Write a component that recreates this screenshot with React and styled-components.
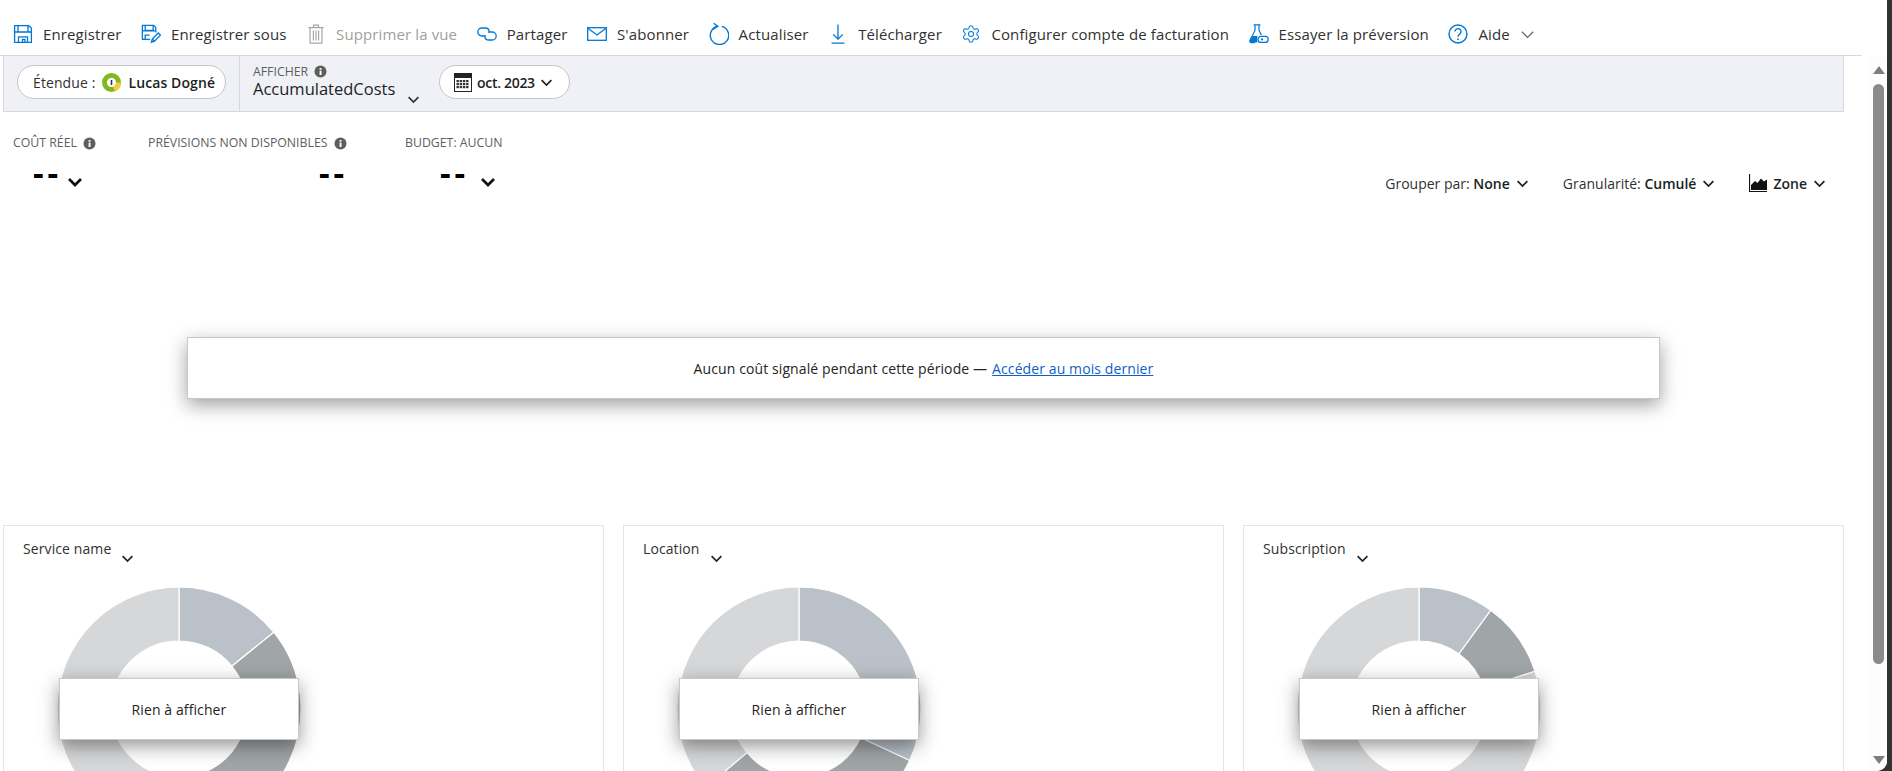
import styled, { createGlobalStyle } from 'styled-components';
import { Settings } from 'lucide-react';

const blue = '#0078d4';

const GlobalStyle = createGlobalStyle`
  html, body {
    margin: 0;
    padding: 0;
    height: 100%;
    overflow: hidden;
    background: #333;
  }
  body {
    font-family: "Open Sans", "Noto Sans", sans-serif;
    font-size: 14px;
    color: #323130;
  }
`;

const Page = styled.div`
  display: flex;
  height: 771px;
  overflow: hidden;
  background: #333;
`;

const Frame = styled.div`
  width: 1887px;
  display: flex;
  background: #fff;
  border-bottom-right-radius: 10px;
  overflow: hidden;
`;

const Main = styled.main`
  width: 1869px;
  flex: none;
`;

const Toolbar = styled.div`
  height: 56px;
  box-sizing: border-box;
  margin-right: 7px;
  padding: 13px 0 0 13px;
  display: flex;
  align-items: center;
  gap: 19.5px;
  border-bottom: 1px solid #d9d9d9;
`;

const ToolButton = styled.div`
  display: flex;
  align-items: center;
  gap: 10px;
  font-size: 15px;
  letter-spacing: 0.12px;
  white-space: nowrap;
  color: ${(p) => (p.$disabled ? '#a19f9d' : '#323130')};
  svg {
    flex: none;
  }
`;

const FilterBar = styled.div`
  height: 56px;
  box-sizing: border-box;
  margin: 0 25px 0 3px;
  display: flex;
  align-items: stretch;
  background: #eff1f6;
  border: 1px solid #d6d8dc;
  border-top: none;
`;

const ScopeSection = styled.div`
  display: flex;
  align-items: center;
  padding: 0 13px 3px;
  border-right: 1px solid #d6d8dc;
`;

const Pill = styled.div`
  height: 34px;
  box-sizing: border-box;
  display: flex;
  align-items: center;
  padding: ${(p) => p.$padding};
  width: ${(p) => p.$width};
  gap: ${(p) => p.$gap};
  background: #fff;
  border: 1px solid #c4c6c9;
  border-radius: 17px;
  white-space: nowrap;
  font-size: 14px;
  letter-spacing: 0.1px;
  svg {
    flex: none;
  }
`;

const Strong = styled.span`
  font-weight: 600;
  color: #201f1e;
`;

const DateText = styled(Strong)`
  letter-spacing: -0.3px;
`;

const ViewSection = styled.div`
  display: flex;
  align-items: center;
  padding: 0 0 3px 13px;
`;

const ViewPicker = styled.div`
  width: 186px;
  margin-bottom: 3px;
  display: flex;
  flex-direction: column;
`;

const SmallLabel = styled.div`
  display: flex;
  align-items: center;
  gap: 6px;
  font-size: 12.3px;
  line-height: 16px;
  color: #605e5c;
  white-space: nowrap;
`;

const ViewName = styled.div`
  font-size: 16.5px;
  line-height: 19px;
  font-weight: 500;
  color: #201f1e;
  display: flex;
  align-items: flex-end;
  gap: 12px;
  margin-top: -1px;
  svg {
    margin-bottom: -8px;
  }
`;

const SummaryRow = styled.div`
  height: 169px;
  display: flex;
  margin-right: 25px;
  padding: 23px 0 0 13px;
  box-sizing: border-box;
`;

const Kpi = styled.div`
  width: ${(p) => p.$width};
  flex: none;
`;

const KpiValue = styled.div`
  display: flex;
  align-items: center;
  gap: ${(p) => p.$gap || '5px'};
  height: 28px;
  margin-top: 8px;
  padding-left: ${(p) => p.$indent};
  font-size: 33px;
  font-weight: 700;
  letter-spacing: 4px;
  color: #000;
  line-height: 20px;
  svg {
    margin-top: 17px;
  }
`;

const ChartControls = styled.div`
  margin-left: auto;
  height: 24px;
  margin-top: 36px;
  padding-right: 18px;
  display: flex;
  align-items: center;
  gap: 34px;
`;

const Control = styled.div`
  display: flex;
  align-items: center;
  gap: 6px;
  white-space: nowrap;
  font-size: 14px;
`;

const Notice = styled.div`
  width: 1473px;
  height: 62px;
  box-sizing: border-box;
  margin: 56px 0 0 187px;
  display: flex;
  align-items: center;
  justify-content: center;
  background: #fff;
  border: 1px solid #c8c8c8;
  box-shadow: 0 6px 18px rgba(0, 0, 0, 0.38);
  font-size: 14px;
  letter-spacing: 0.1px;
  color: #252423;
  gap: 5px;
`;

const NoticeLink = styled.a`
  color: #0f5fc9;
  text-decoration: underline;
`;

const CardGrid = styled.div`
  display: grid;
  grid-template-columns: repeat(3, 601px);
  column-gap: 19px;
  margin: 126px 0 0 3px;
`;

const Card = styled.section`
  position: relative;
  height: 400px;
  box-sizing: border-box;
  border: 1px solid #e4e4e4;
  padding: 13px 0 0 19px;
`;

const CardTitle = styled.div`
  display: flex;
  align-items: flex-start;
  gap: 10px;
  height: 48px;
  font-size: 14px;
  line-height: 20px;
  letter-spacing: 0.1px;
  color: #323130;
  svg {
    margin-top: 13px;
  }
`;

const Donut = styled.svg`
  display: block;
  margin-left: 34px;
`;

const EmptyBox = styled.div`
  position: absolute;
  left: 55px;
  top: 152px;
  width: 240px;
  height: 62px;
  box-sizing: border-box;
  display: flex;
  align-items: center;
  justify-content: center;
  background: #fff;
  border: 1px solid #c8c8c8;
  box-shadow: 0 6px 18px rgba(0, 0, 0, 0.42);
  font-size: 14px;
  letter-spacing: 0.1px;
  color: #252423;
`;

const Scrollbar = styled.div`
  width: 18px;
  flex: none;
  margin-top: 56px;
  box-sizing: border-box;
  padding: 10px 3px 7px 4px;
  display: flex;
  flex-direction: column;
  align-items: center;
  background: #fdfdfd;
`;

const ScrollArrow = styled.div`
  width: 0;
  height: 0;
  flex: none;
  border-left: 6px solid transparent;
  border-right: 6px solid transparent;
  ${(p) => (p.$down ? 'border-top: 8px solid #7d7d7d; margin-top: auto;' : 'border-bottom: 8px solid #7d7d7d;')}
`;

const ScrollThumb = styled.div`
  width: 11px;
  height: 580px;
  flex: none;
  margin-top: 10px;
  border-radius: 6px;
  background: #8b8b8b;
`;

function Chevron({ size = 12, width = 1.6, color = '#201f1e' }) {
  return (
    <svg width={size} height={size} viewBox="0 0 12 12" fill="none">
      <path d="M1.5 3.8 6 8.3l4.5-4.5" stroke={color} strokeWidth={width} />
    </svg>
  );
}

function InfoDot() {
  return (
    <svg width="13" height="13" viewBox="0 0 13 13">
      <circle cx="6.5" cy="6.5" r="6" fill="#605e5c" />
      <rect x="5.6" y="5.6" width="1.9" height="4.4" fill="#fff" />
      <rect x="5.6" y="3" width="1.9" height="1.7" fill="#fff" />
    </svg>
  );
}

const SaveIcon = () => (
  <svg width="20" height="20" viewBox="0 0 20 20" fill="none" stroke={blue} strokeWidth="1.3">
    <path d="M1.6 1.6h14.2l2.6 2.6v14.2H1.6z" />
    <path d="M5 1.6v6.2h10V1.6M1.6 8h16.8M5.5 18.4v-5.6h9v5.6M9.5 18.4v-3h2.4v3" />
  </svg>
);

const SaveAsIcon = () => (
  <svg width="20" height="20" viewBox="0 0 20 20" fill="none" stroke={blue} strokeWidth="1.3">
    <path d="M9 15.4H1.4V1.4h11.4l2 2v5.2" />
    <path d="M4.2 1.4v5h8v-5M1.4 6.8h13M4.2 15.2v-4h4.4" />
    <path d="M10.4 18.2l.9-3.2 6-6 2.2 2.2-6 6z" />
    <path d="M11.3 15l2.2 2.2" />
  </svg>
);

const TrashIcon = () => (
  <svg width="20" height="20" viewBox="0 0 20 20" fill="none" stroke="#a6a6a6" strokeWidth="1.2">
    <path d="M2.5 3.6h15M7.5 3.4V1.2h5v2.2M4 3.6v15.6h12V3.6" />
    <path d="M7.4 6.5v10M10 6.5v10M12.6 6.5v10" />
  </svg>
);

const ShareIcon = () => (
  <svg width="20" height="20" viewBox="0 0 20 20" fill="none" stroke={blue} strokeWidth="1.3">
    <path d="M9 12H4.8a4 4 0 0 1 0-8h3.6a4 4 0 0 1 3.9 3.4" />
    <path d="M11 8h4.2a4 4 0 0 1 0 8h-3.6a4 4 0 0 1-3.9-3.4" />
  </svg>
);

const MailIcon = () => (
  <svg width="20" height="20" viewBox="0 0 20 20" fill="none" stroke={blue} strokeWidth="1.3">
    <rect x="0.7" y="3.7" width="18.6" height="12.6" />
    <path d="M1 4.2 10 11l9-6.8" />
  </svg>
);

const RefreshIcon = () => (
  <svg width="20" height="22" viewBox="0 0 20 22" fill="none" stroke={blue} strokeWidth="1.4">
    <path d="M12.8 3.4A9.2 9.2 0 1 1 8.7 3.3" />
    <path d="M4.6 0.3 8.7 3.3 4 6.4" />
  </svg>
);

const DownloadIcon = () => (
  <svg width="20" height="20" viewBox="0 0 20 20" fill="none" stroke={blue} strokeWidth="1.3">
    <path d="M10 0.5v14.5M5.2 10.4 10 15.2l4.8-4.8M3.6 19.2h12.8" />
  </svg>
);

const FlaskIcon = () => (
  <svg width="20" height="20" viewBox="0 0 20 20" fill="none" stroke={blue} strokeWidth="1.2">
    <path d="M4.6 0.8h6.8M6 0.8v5.6L1 16.2c-.5 1.2.1 2.4 1.5 2.4h3.3" />
    <path d="M10 0.8v5.6l2.4 4.6" />
    <path d="M3.6 12h4.6v6.6H2.4c-1.4 0-2-1.2-1.4-2.4z" fill={blue} stroke="none" />
    <rect x="9" y="12.4" width="10.2" height="6" rx="3" />
    <circle cx="13" cy="15.4" r="1.1" fill={blue} stroke="none" />
  </svg>
);

const HelpIcon = () => (
  <svg width="20" height="20" viewBox="0 0 20 20" fill="none" stroke={blue} strokeWidth="1.4">
    <circle cx="10" cy="10" r="9" />
    <path d="M7 7.6a3 3 0 1 1 4.7 2.5c-1 .7-1.7 1.2-1.7 2.7" />
    <circle cx="10" cy="15.2" r="0.9" fill={blue} stroke="none" />
  </svg>
);

const ScopeLogo = () => (
  <svg width="19" height="19" viewBox="0 0 19 19">
    <circle cx="9.5" cy="9.5" r="7" fill="none" stroke="#7fb81f" strokeWidth="5" />
    <path d="M16.5 9.5a7 7 0 0 1-4.5 6.5" fill="none" stroke="#f7c93e" strokeWidth="5" />
    <circle cx="9.5" cy="9.5" r="4.2" fill="#fff" />
    <rect x="8.7" y="7" width="1.6" height="5" fill="#333" />
  </svg>
);

const CalendarIcon = () => (
  <svg width="18" height="19" viewBox="0 0 18 19">
    <rect x="0.5" y="0.5" width="17" height="18" fill="#fff" stroke="#222" />
    <rect x="0" y="0" width="18" height="5" fill="#222" />
    {[7, 10, 13].map((y) =>
      [2.5, 5.7, 8.9, 12.1].map((x) => <rect key={`${x}-${y}`} x={x} y={y} width="2.4" height="2.2" fill="#333" />)
    )}
  </svg>
);

const AreaIcon = () => (
  <svg width="18" height="18" viewBox="0 0 18 18">
    <path d="M0.5 0v17.5H18" fill="none" stroke="#111" strokeWidth="1.2" />
    <path d="M2 15V11l4-4 2.5 2L12 4.5l3 3 3-2V16H2z" fill="#111" />
  </svg>
);

const tools = [
  { label: 'Enregistrer', Icon: SaveIcon },
  { label: 'Enregistrer sous', Icon: SaveAsIcon },
  { label: 'Supprimer la vue', Icon: TrashIcon, disabled: true },
  { label: 'Partager', Icon: ShareIcon },
  { label: "S'abonner", Icon: MailIcon },
  { label: 'Actualiser', Icon: RefreshIcon },
  { label: 'Télécharger', Icon: DownloadIcon },
  { label: 'Configurer compte de facturation', Icon: () => <Settings size={20} color={blue} strokeWidth={1.25} /> },
  { label: 'Essayer la préversion', Icon: FlaskIcon },
  { label: 'Aide', Icon: HelpIcon },
];

const slate = '#bac1c9';
const steel = '#a0a5a8';
const pale = '#d5d7d9';

const cards = [
  { title: 'Service name', slices: [[0, 51, slate], [51, 180, steel], [180, 360, pale]] },
  { title: 'Location', slices: [[0, 115, slate], [115, 230, steel], [230, 360, pale]] },
  { title: 'Subscription', slices: [[0, 36, slate], [36, 72, steel], [72, 360, pale]] },
];

const OUTER = 122;
const INNER = 68;

function polar(radius, deg) {
  const rad = ((deg - 90) * Math.PI) / 180;
  return `${(OUTER + radius * Math.cos(rad)).toFixed(2)} ${(OUTER + radius * Math.sin(rad)).toFixed(2)}`;
}

function slicePath(from, to) {
  const large = to - from > 180 ? 1 : 0;
  return `M${polar(OUTER, from)} A${OUTER} ${OUTER} 0 ${large} 1 ${polar(OUTER, to)} L${polar(INNER, to)} A${INNER} ${INNER} 0 ${large} 0 ${polar(INNER, from)} Z`;
}

function BreakdownCard({ title, slices }) {
  return (
    <Card>
      <CardTitle>
        {title}
        <Chevron size={13} color="#252423" />
      </CardTitle>
      <Donut width={OUTER * 2} height={OUTER * 2} viewBox={`0 0 ${OUTER * 2} ${OUTER * 2}`}>
        {slices.map(([from, to, color]) => (
          <path key={from} d={slicePath(from, to)} fill={color} stroke="#fff" strokeWidth="1.2" />
        ))}
      </Donut>
      <EmptyBox>Rien à afficher</EmptyBox>
    </Card>
  );
}

export default function App() {
  return (
    <Page>
      <GlobalStyle />
      <Frame>
        <Main>
          <Toolbar>
            {tools.map(({ label, Icon, disabled }) => (
              <ToolButton key={label} $disabled={disabled}>
                <Icon />
                {label}
                {label === 'Aide' && <Chevron size={15} width={0.9} color="#605e5c" />}
              </ToolButton>
            ))}
          </Toolbar>

          <FilterBar>
            <ScopeSection>
              <Pill $padding="0 10px 0 15px" $width="209px" $gap="7px">
                Étendue :
                <ScopeLogo />
                <Strong>Lucas Dogné</Strong>
              </Pill>
            </ScopeSection>
            <ViewSection>
              <ViewPicker>
                <SmallLabel>
                  AFFICHER <InfoDot />
                </SmallLabel>
                <ViewName>
                  AccumulatedCosts
                  <Chevron size={13} color="#323130" />
                </ViewName>
              </ViewPicker>
              <Pill $padding="0 0 0 14px" $width="131px" $gap="5px">
                <CalendarIcon />
                <DateText>oct. 2023</DateText>
                <Chevron size={13} />
              </Pill>
            </ViewSection>
          </FilterBar>

          <SummaryRow>
            <Kpi $width="135px">
              <SmallLabel>
                COÛT RÉEL <InfoDot />
              </SmallLabel>
              <KpiValue $indent="20px">
                --
                <Chevron size={16} width={2} color="#111" />
              </KpiValue>
            </Kpi>
            <Kpi $width="257px">
              <SmallLabel>
                PRÉVISIONS NON DISPONIBLES <InfoDot />
              </SmallLabel>
              <KpiValue $indent="171px">--</KpiValue>
            </Kpi>
            <Kpi $width="200px">
              <SmallLabel>BUDGET: AUCUN</SmallLabel>
              <KpiValue $indent="35px" $gap="11px">
                --
                <Chevron size={16} width={2} color="#111" />
              </KpiValue>
            </Kpi>
            <ChartControls>
              <Control>
                <span>
                  Grouper par: <Strong>None</Strong>
                </span>
                <Chevron size={13} />
              </Control>
              <Control>
                <span>
                  Granularité: <Strong>Cumulé</Strong>
                </span>
                <Chevron size={13} />
              </Control>
              <Control>
                <AreaIcon />
                <Strong>Zone</Strong>
                <Chevron size={13} />
              </Control>
            </ChartControls>
          </SummaryRow>

          <Notice>
            Aucun coût signalé pendant cette période —<NoticeLink href="#">Accéder au mois dernier</NoticeLink>
          </Notice>

          <CardGrid>
            {cards.map((card) => (
              <BreakdownCard key={card.title} {...card} />
            ))}
          </CardGrid>
        </Main>
        <Scrollbar>
          <ScrollArrow />
          <ScrollThumb />
          <ScrollArrow $down />
        </Scrollbar>
      </Frame>
    </Page>
  );
}
